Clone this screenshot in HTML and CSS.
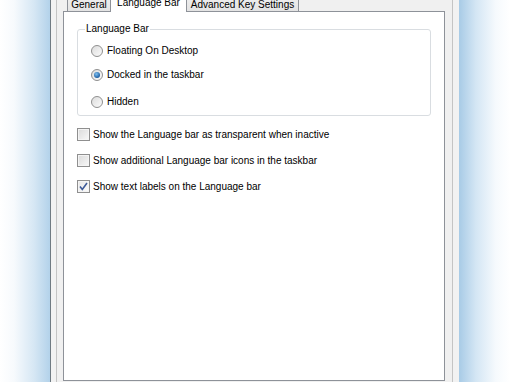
FILE: index.html
```html
<!DOCTYPE html>
<html lang="en">
  <head>
    <meta charset="utf-8">
    <title>Text Services and Input Languages</title>
    <link rel="stylesheet" href="styles.css">
  </head>
  <body>
    <div class="window">
      <div class="client">
        <div class="tabs">
          <div class="tab t-general">General</div>
          <div class="tab t-lang active">Language Bar</div>
          <div class="tab t-adv">Advanced Key Settings</div>
        </div>
        <div class="panel">
          <fieldset class="group">
            <legend>Language Bar</legend>
            <label class="opt opt-1"><span class="radio"></span>Floating On Desktop</label>
            <label class="opt opt-2"><span class="radio on"></span>Docked in the taskbar</label>
            <label class="opt opt-3"><span class="radio"></span>Hidden</label>
          </fieldset>
          <label class="chk chk-1"><span class="box"></span>Show the Language bar as transparent when inactive</label>
          <label class="chk"><span class="box"></span>Show additional Language bar icons in the taskbar</label>
          <label class="chk"><span class="box on"><svg width="9" height="9" viewBox="0 0 9 9"><path d="M1 4.5 L3.3 7.5 L8 1" fill="none" stroke="#3d5a98" stroke-width="1.6"/></svg></span>Show text labels on the Language bar</label>
        </div>
      </div>
    </div>
  </body>
</html>
```

FILE: styles.css
```css
html { box-sizing : border-box }
*, *:before, *:after { box-sizing : inherit }

:root {
  --c-dlg : #f0f0f0;
  --c-tab-border : #8e9299;
  --c-group : #d9dde1;
  --c-ctrl : #8f8f8f;

  --f-ui : "Liberation Sans", Arial, sans-serif;
}

body {
  margin : 0;
  height : 382px;
  overflow : hidden;
  font-family : var(--f-ui);
  font-size : 10px;
  color : #000;
  background : linear-gradient(to right,
    #ffffff 0, #f7fafd 14px, #d6e7f4 34px, #b3d2ea 50px,
    #b3d2ea 458px, #a8cbe6 459px, #d4e6f4 476px, #f6fafd 496px, #ffffff 510px);
}

.window {
  margin : -10px 0 0 50px;
  width : 409px;
  height : 400px;
  padding : 0 6px 0 5px;
  background : #f2f2f2;
  border-left : 1px solid #6f7a82;
}

.client {
  height : 100%;
  padding : 0 7px 0 6px;
  background : var(--c-dlg);
  border-left : 1px solid #c4c4c4;
  border-right : 1px solid #c4c4c4;
}

/* tab strip */
.tabs {
  display : flex;
  align-items : flex-end;
  height : 21px;
  padding-left : 4px;
}

.tab {
  padding-top : 7px;
  line-height : 12px;
  text-align : center;
  background : linear-gradient(#f3f3f3, #e3e3e3);
  border : 1px solid var(--c-tab-border);
  border-bottom : none;
}

.t-general { width : 44px }
.t-lang { width : 77px; margin : 0 -1px }
.t-adv { width : 113px }

.tab.active {
  position : relative;
  z-index : 1;
  padding-bottom : 3px;
  margin-bottom : -1px;
  background : #fff;
}

/* page */
.panel {
  height : 370px;
  background : #fff;
  border : 1px solid var(--c-tab-border);
  padding : 0 13px;
}

.group {
  margin : 11px 0 0 0;
  padding : 0 0 7px 7px;
  border : 1px solid var(--c-group);
  border-radius : 3px;
}

.group legend {
  padding : 0 1px;
  line-height : 12px;
}

.opt, .chk {
  display : flex;
  align-items : center;
  height : 13px;
  line-height : 13px;
}

.opt { margin-left : 6px }
.opt-1 { margin-top : 9px }
.opt-2 { margin-top : 11px }
.opt-3 { margin-top : 14px }

.radio {
  position : relative;
  width : 12px;
  height : 12px;
  margin-right : 4px;
  border-radius : 50%;
  border : 1px solid var(--c-ctrl);
  background : linear-gradient(135deg, #dcdcdc, #fbfbfb);
}

.radio.on::after {
  content : "";
  position : absolute;
  left : 2px;
  top : 2px;
  width : 6px;
  height : 6px;
  border-radius : 50%;
  background : radial-gradient(circle at 40% 35%, #7fc0f0, #1e5fa3 70%, #173f75);
}

.chk { margin-top : 13px }
.chk-1 { margin-top : 12px }

.box {
  display : flex;
  align-items : center;
  justify-content : center;
  width : 13px;
  height : 13px;
  margin-right : 3px;
  border : 1px solid var(--c-ctrl);
  background : linear-gradient(135deg, #dadada, #f8f8f8);
  box-shadow : inset 0 0 0 1px #f4f4f4;
}

.box.on { background : linear-gradient(135deg, #e6e6e6, #fcfcfc) }
```
